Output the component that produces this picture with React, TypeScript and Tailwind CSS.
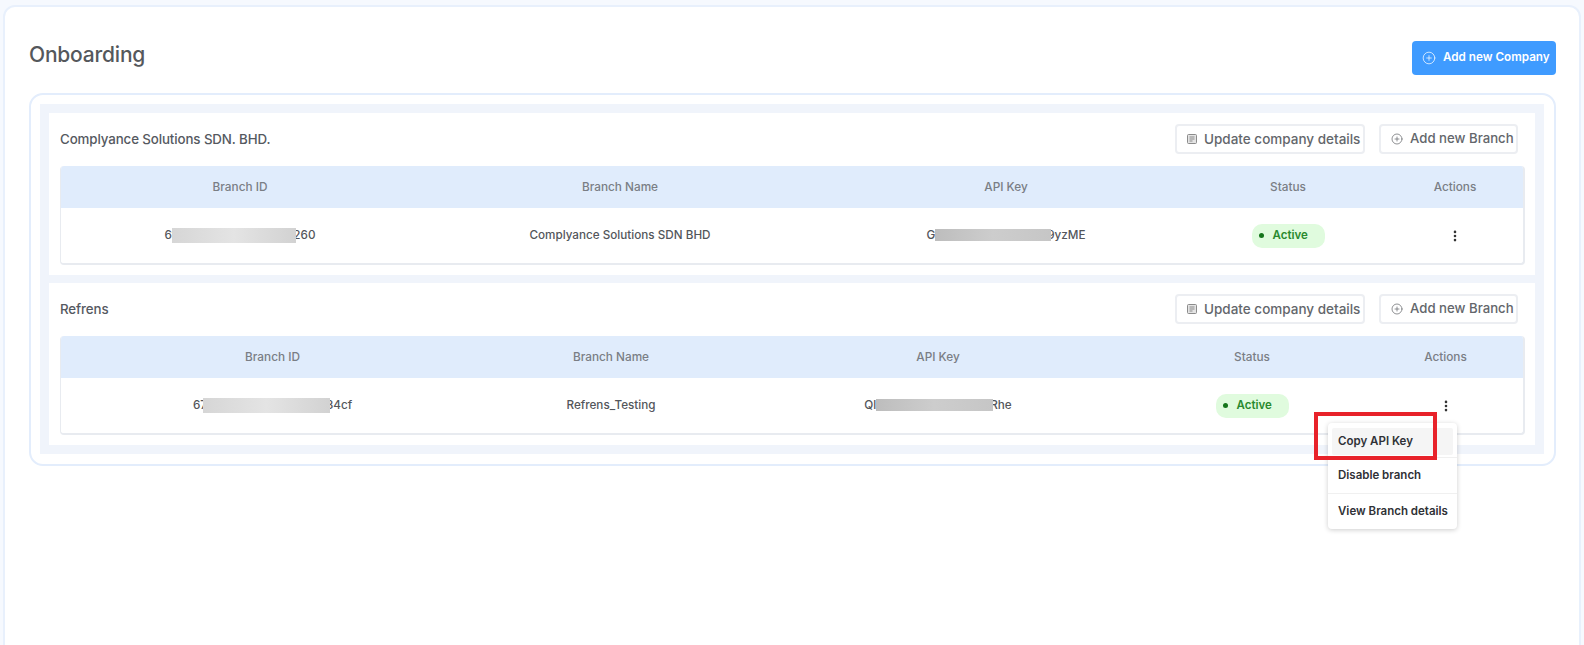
import { CirclePlus, EllipsisVertical } from "lucide-react";

const font = { fontFamily: '"Inter", "Noto Sans", sans-serif' };

function DocIcon() {
  return (
    <svg width="10" height="10" viewBox="0 0 10 10" className="shrink-0">
      <rect x="0.5" y="0.5" width="9" height="9" rx="1" fill="#e4e4e4" stroke="#8b8b8b" />
      <path d="M2.5 3h5M2.5 5h5M2.5 7h3" stroke="#8b8b8b" strokeWidth="1" />
    </svg>
  );
}

function Redacted({
  pre,
  post,
  bar,
  postClass,
  preClass,
}: {
  pre: string;
  post: string;
  bar: string;
  postClass: string;
  preClass: string;
}) {
  return (
    <span className="inline-flex items-center justify-center">
      <span className={preClass}>{pre}</span>
      <span className={`relative z-10 ${bar}`} />
      <span className={postClass}>{post}</span>
    </span>
  );
}

type Cell = { text: [string, string]; bar: string; preClass: string; postClass: string };
type Row = { id: Cell; name: string; key: Cell };

const idBar = "h-[15px] bg-gradient-to-r from-[#d6d6d6] via-[#e4e4e4] to-[#d2d2d2]";
const keyBar = "h-[12px] bg-gradient-to-r from-[#bdbdbd] via-[#cdcdcd] to-[#c6c6c6]";

function CompanyCard({
  title,
  widths,
  row,
}: {
  title: string;
  widths: string[];
  row: Row;
}) {
  const headers = ["Branch ID", "Branch Name", "API Key", "Status", "Actions"];
  return (
    <section className="bg-white pl-[11px] pr-[10px] pt-[11px] pb-[10px]">
      <div className="flex items-center justify-between pr-[7px] mb-[12px]">
        <h2 className="text-[13.3px] font-medium text-[#55595f] tracking-[-0.1px] pt-[2px]">{title}</h2>
        <div className="flex gap-[14px]">
          <button className="h-[30px] w-[190px] flex items-center pl-[10px] gap-[7px] border-2 border-[#eceef2] rounded-[4px] text-[13.5px] font-medium text-[#63666b]">
            <DocIcon />
            Update company details
          </button>
          <button className="h-[30px] w-[139px] flex items-center pl-[10px] gap-[7px] border-2 border-[#eceef2] rounded-[4px] text-[13.2px] font-medium text-[#63666b]">
            <CirclePlus size={12} strokeWidth={1.5} color="#6a6c70" />
            Add new Branch
          </button>
        </div>
      </div>
      <div className="border-2 border-[#e8ebf0] border-t-0 border-l rounded-[4px] overflow-hidden">
        <table className="w-full table-fixed border-collapse">
          <colgroup>
            {widths.map((w, i) => (
              <col key={i} className={w} />
            ))}
          </colgroup>
          <thead>
            <tr className="bg-[#e0ecfc] h-[42px]">
              {headers.map((h) => (
                <th key={h} className="text-[11.8px] font-medium text-[#7a7e85] text-center pt-[2px]">
                  {h}
                </th>
              ))}
            </tr>
          </thead>
          <tbody>
            <tr className="h-[55px] text-[11.7px] font-medium text-[#53565b] text-center">
              <td>
                <Redacted
                  pre={row.id.text[0]}
                  post={row.id.text[1]}
                  bar={row.id.bar}
                  preClass={row.id.preClass}
                  postClass={row.id.postClass}
                />
              </td>
              <td className="pt-[1px]">{row.name}</td>
              <td>
                <Redacted
                  pre={row.key.text[0]}
                  post={row.key.text[1]}
                  bar={row.key.bar}
                  preClass={row.key.preClass}
                  postClass={row.key.postClass}
                />
              </td>
              <td>
                <span className="inline-flex items-center gap-[9px] w-[73px] h-[24px] pl-[7px] rounded-[10px] bg-[#e0fbde] text-[11.5px] font-semibold text-[#2a8a2e]">
                  <span className="w-[5px] h-[5px] rounded-full bg-[#15751b]" />
                  Active
                </span>
              </td>
              <td>
                <EllipsisVertical size={14} strokeWidth={2.5} color="#333" className="inline-block" />
              </td>
            </tr>
          </tbody>
        </table>
      </div>
    </section>
  );
}

export default function App() {
  return (
    <div style={font} className="h-[645px] overflow-hidden bg-[#f6f9fe] pt-[5px] pl-[3px] pr-[3px]">
      <div className="relative h-[660px] bg-white border-2 border-[#e8f0fc] rounded-[12px] pt-[34px] pl-[24px] pr-[23px]">
        <div className="flex items-center justify-between h-[34px] mb-[18px]">
          <h1 className="text-[21px] font-medium text-[#55585c] tracking-[-0.2px] mb-[6px]">Onboarding</h1>
          <button className="h-[34px] w-[144px] flex items-center pl-[10px] gap-[7px] rounded-[4px] bg-[#3f9bff] text-white text-[11.7px] font-semibold">
            <CirclePlus size={14} strokeWidth={1.25} />
            Add new Company
          </button>
        </div>
        <div className="border-2 border-[#e3edfc] rounded-[14px] pt-[9px] pl-[9px] pr-[10px] pb-[10px]">
          <div className="bg-[#f0f4fb] p-[9px] flex flex-col gap-[8px]">
            <CompanyCard
              title="Complyance Solutions SDN. BHD."
              widths={["w-[358px]", "w-[402px]", "w-[370px]", "w-[194px]", "w-[140px]"]}
              row={{
                id: {
                  text: ["6f", "260"],
                  bar: `w-[124px] ${idBar}`,
                  preClass: "-mr-[4px]",
                  postClass: "-ml-[3px]",
                },
                name: "Complyance Solutions SDN BHD",
                key: {
                  text: ["G", "9yzME"],
                  bar: `w-[116px] ${keyBar}`,
                  preClass: "",
                  postClass: "-ml-[4px]",
                },
              }}
            />
            <CompanyCard
              title="Refrens"
              widths={["w-[423px]", "w-[254px]", "w-[400px]", "w-[228px]", "w-[159px]"]}
              row={{
                id: {
                  text: ["67", "34cf"],
                  bar: `w-[127px] ${idBar}`,
                  preClass: "-mr-[4px]",
                  postClass: "-ml-[4px]",
                },
                name: "Refrens_Testing",
                key: {
                  text: ["Ql", "Rhe"],
                  bar: `w-[117px] ${keyBar}`,
                  preClass: "",
                  postClass: "-ml-[3px]",
                },
              }}
            />
          </div>
        </div>
        <div className="absolute left-[1323px] top-[416px] w-[129px] h-[106px] bg-white rounded-[4px] shadow-[0_1px_5px_rgba(0,0,0,0.2)] text-[11.5px] font-semibold text-[#2f3136]">
          <div className="h-[35px] pt-[5px] px-[4px] border-b border-[#f0f0f0]">
            <div className="h-[27px] bg-[#f5f5f5] flex items-center pl-[6px] rounded-[2px]">Copy API Key</div>
          </div>
          <div className="h-[36px] flex items-center pl-[10px] border-b border-[#f0f0f0]">Disable branch</div>
          <div className="h-[35px] flex items-center pl-[10px]">View Branch details</div>
        </div>
        <div className="absolute left-[1309px] top-[405px] w-[123px] h-[48px] border-[4px] border-[#e8222a]" />
      </div>
    </div>
  );
}
